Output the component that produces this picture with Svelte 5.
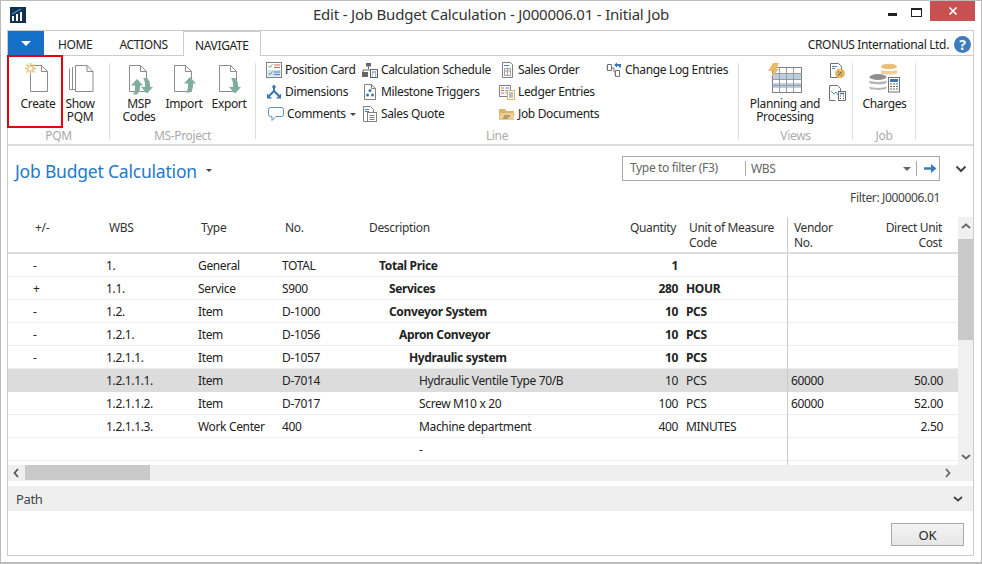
<script>
  const rows = [
    { exp: '-', wbs: '1.', type: 'General', no: 'TOTAL', level: 0, desc: 'Total Price', qty: '1', unit: '', bold: true },
    { exp: '+', wbs: '1.1.', type: 'Service', no: 'S900', level: 1, desc: 'Services', qty: '280', unit: 'HOUR', bold: true },
    { exp: '-', wbs: '1.2.', type: 'Item', no: 'D-1000', level: 1, desc: 'Conveyor System', qty: '10', unit: 'PCS', bold: true },
    { exp: '-', wbs: '1.2.1.', type: 'Item', no: 'D-1056', level: 2, desc: 'Apron Conveyor', qty: '10', unit: 'PCS', bold: true },
    { exp: '-', wbs: '1.2.1.1.', type: 'Item', no: 'D-1057', level: 3, desc: 'Hydraulic system', qty: '10', unit: 'PCS', bold: true },
    { exp: '', wbs: '1.2.1.1.1.', type: 'Item', no: 'D-7014', level: 4, desc: 'Hydraulic Ventile Type 70/B', qty: '10', unit: 'PCS', vendor: '60000', cost: '50.00', selected: true },
    { exp: '', wbs: '1.2.1.1.2.', type: 'Item', no: 'D-7017', level: 4, desc: 'Screw M10 x 20', qty: '100', unit: 'PCS', vendor: '60000', cost: '52.00' },
    { exp: '', wbs: '1.2.1.1.3.', type: 'Work Center', no: '400', level: 4, desc: 'Machine department', qty: '400', unit: 'MINUTES', cost: '2.50' },
    { exp: '', wbs: '', type: '', no: '', level: 4, desc: '-', qty: '', unit: '' }
  ];
</script>

{#snippet doc()}
  <path d="M5.500 1.500h11l6 6v20h-17z M16.500 1.500v6h6" fill="#fff" stroke="#8c8c8c" />
{/snippet}

<!-- curved tail arrows used on the MS-Project buttons -->
{#snippet arrowUp(x, y)}
  <g transform="translate({x} {y})">
    <path d="M0 6.500L6 0l6 6.500H9v2c0 3 -1 5 -3 7H2c1.500 -2 2 -4 2 -7v-2z" fill="#7fae9c" />
  </g>
{/snippet}

{#snippet arrowDown(x, y)}
  <g transform="translate({x} {y})">
    <path d="M0 9L6 15.500 12 9H9V7c0 -3 -1 -5 -3 -7H2c1.500 2 2 4 2 7v2z" fill="#7fae9c" />
  </g>
{/snippet}

<div class="window">
  <header class="titlebar">
    <svg class="app-icon" width="16" height="16" viewBox="0 0 16 16">
      <rect width="16" height="16" fill="#14304f" />
      <path d="M2 14V9h2v5zM6 14V7h2v7zM10 14V5h2v9z" fill="#fff" />
      <path d="M2 7l9 -5" stroke="#3f8ed6" stroke-width="1.400" fill="none" />
    </svg>
    <div class="title">Edit - Job Budget Calculation - J000006.01 - Initial Job</div>
    <div class="controls">
      <span class="min"></span>
      <span class="max"></span>
      <span class="close">
        <svg width="10" height="10" viewBox="0 0 10 10"><path d="M1.500 1.500l7 7M8.500 1.500l-7 7" stroke="#fff" stroke-width="1.700" /></svg>
      </span>
    </div>
  </header>

  <div class="frame">
    <nav class="tabs">
      <div class="menu-btn"><span></span></div>
      <div class="tab home">HOME</div>
      <div class="tab actions">ACTIONS</div>
      <div class="tab active">NAVIGATE</div>
      <div class="company">CRONUS International Ltd.</div>
      <div class="help">?</div>
    </nav>

    <section class="ribbon">
      <div class="group g-pqm">
        <div class="group-body">
          <div class="big w-create selected-btn">
            <svg width="30" height="30" viewBox="0 0 30 30">
              <g transform="translate(2 1)">{@render doc()}</g>
              <g stroke="#e8bb6a" stroke-width="1.400">
                <path d="M7.500 0v11M2 5.500h11M3.600 1.600l7.800 7.800M11.400 1.600l-7.800 7.800" />
              </g>
              <circle cx="7.500" cy="5.500" r="2.600" fill="#fff" stroke="#e8bb6a" />
            </svg>
            <span class="lbl">Create</span>
          </div>
          <div class="big w-show">
            <svg width="30" height="30" viewBox="0 0 30 30">
              <path d="M4.500 5.500v21h6M7.500 4v22.500" fill="none" stroke="#8c8c8c" />
              <path d="M10.500 2.500h11.500l6 6v20h-17.500z M22 2.500v6h6" fill="#fff" stroke="#8c8c8c" />
            </svg>
            <span class="lbl">Show<br />PQM</span>
          </div>
        </div>
        <div class="group-label">PQM</div>
      </div>

      <div class="group g-ms">
        <div class="group-body">
          <div class="big w-msp">
            <svg width="32" height="32" viewBox="0 0 32 32">
              <g transform="translate(1 1)">{@render doc()}</g>
              {@render arrowUp(8, 16)}
              {@render arrowDown(18, 15)}
            </svg>
            <span class="lbl up2">MSP<br />Codes</span>
          </div>
          <div class="big w-import">
            <svg width="30" height="32" viewBox="0 0 30 32">
              <g transform="translate(0 1)">{@render doc()}</g>
              {@render arrowUp(15, 14)}
            </svg>
            <span class="lbl up2">Import</span>
          </div>
          <div class="big w-export">
            <svg width="30" height="32" viewBox="0 0 30 32">
              <g transform="translate(0 1)">{@render doc()}</g>
              {@render arrowDown(15, 15)}
            </svg>
            <span class="lbl up2">Export</span>
          </div>
        </div>
        <div class="group-label">MS-Project</div>
      </div>

      <div class="group g-line">
        <div class="group-body small-cols">
          <div class="col c1">
            <div class="small">
              <svg width="16" height="16" viewBox="0 0 16 16">
                <rect x=".5" y=".5" width="15" height="15" fill="#fff" stroke="#808080" />
                <rect x="1.500" y="8" width="13" height="6.500" fill="#cfe0ef" />
                <path d="M2.500 4l1.500 1.500 2.500-3M2.500 11l1.500 1.500 2.500-3" stroke="#5aa27c" fill="none" />
                <path d="M8 3h6M8 5.500h6" stroke="#d0675a" />
                <path d="M8 10h6M8 12.500h6" stroke="#4f81b8" />
              </svg>
              Position Card
            </div>
            <div class="small">
              <svg width="16" height="16" viewBox="0 0 16 16">
                <path d="M8 7V2M8 7l-5 5M8 7l5 5" stroke="#3a76b0" stroke-width="2" fill="none" />
                <path d="M5.500 3.500L8 .5l2.500 3zM1 9.500v5h5zM15 9.500v5h-5z" fill="#3a76b0" />
              </svg>
              Dimensions
            </div>
            <div class="small comments">
              <svg width="16" height="16" viewBox="0 0 16 16">
                <path d="M2.500 1.500h11a2 2 0 0 1 2 2v5a2 2 0 0 1-2 2H8l-4 4v-4H2.500a2 2 0 0 1-2-2v-5a2 2 0 0 1 2-2z" fill="#fff" stroke="#5a8fc0" />
              </svg>
              Comments<i class="caret"></i>
            </div>
          </div>

          <div class="col c2">
            <div class="small">
              <svg width="16" height="16" viewBox="0 0 16 16">
                <rect x="4" y="1" width="5" height="3.500" fill="#666" />
                <path d="M6.500 4.500V7M1 12V8h9" stroke="#666" fill="none" />
                <rect x="0" y="10" width="6" height="5" fill="#666" />
                <rect x="8.500" y="7.500" width="7" height="8" fill="#fff" stroke="#666" />
                <path d="M10 10h4M10 12h1M13 12h1M10 14h1M13 14h1" stroke="#3a76b0" />
              </svg>
              Calculation Schedule
            </div>
            <div class="small">
              <svg width="16" height="16" viewBox="0 0 16 16">
                <path d="M2.500.5h7l4 4v11h-11z M9.500.5v4h4" fill="#fff" stroke="#808080" />
                <g fill="#3a76b0">
                  <circle cx="8" cy="6.500" r="1.500" />
                  <circle cx="5.500" cy="11" r="1.500" />
                  <circle cx="10.500" cy="11" r="1.500" />
                </g>
              </svg>
              Milestone Triggers
            </div>
            <div class="small">
              <svg width="16" height="16" viewBox="0 0 16 16">
                <path d="M1.500.5h7l3 3v3M1.500.5v15h4" fill="#fff" stroke="#808080" />
                <path d="M3 3.500h4M3 5.500h4" stroke="#4f81b8" />
                <rect x="5.500" y="6.500" width="9" height="9" fill="#fff" stroke="#808080" />
                <path d="M7.500 9.500h5M7.500 11.500h5M7.500 13.500h5" stroke="#808080" />
              </svg>
              Sales Quote
            </div>
          </div>

          <div class="col c3">
            <div class="small">
              <svg width="16" height="16" viewBox="0 0 16 16">
                <path d="M3.500.5h8l2 2v13h-10z" fill="#fff" stroke="#808080" />
                <path d="M5 3.500h5" stroke="#4f81b8" />
                <path d="M5.500 6.500h6v7h-6zM8.500 6.500v7M5.500 9h6" stroke="#a0a0a0" fill="none" />
              </svg>
              Sales Order
            </div>
            <div class="small">
              <svg width="16" height="16" viewBox="0 0 16 16">
                <rect x=".5" y="1.500" width="11" height="11" fill="#fff" stroke="#808080" />
                <path d="M2 4h3M2 6.500h3M2 9h3" stroke="#d0675a" />
                <path d="M6.500 4h3.500M6.500 6.500h3.500M6.500 9h3.500" stroke="#4f81b8" />
                <rect x="8.500" y="6.500" width="7" height="9" fill="#fff" stroke="#d9b56e" />
                <path d="M10 9h4M10 11h4M10 13h4" stroke="#808080" />
              </svg>
              Ledger Entries
            </div>
            <div class="small">
              <svg width="16" height="16" viewBox="0 0 16 16">
                <path d="M0 3h6l1.500 2H15v9H0z" fill="#d9b56e" />
                <path d="M1 7h15l-1.500 7H0z" fill="#edcf96" />
                <path d="M5 10h6M4 12h5" stroke="#7a6a4a" />
              </svg>
              Job Documents
            </div>
          </div>

          <div class="col c4">
            <div class="small">
              <svg width="16" height="16" viewBox="0 0 16 16">
                <path d="M1.500 2.500h4v6h-4zM.5 4.500h1M.5 6.500h1M9.500 8.500h4v6h-4zM8.500 10.500h1M8.500 12.500h1" fill="#fff" stroke="#707070" />
                <path d="M5.500 6h2.500V10" stroke="#707070" fill="none" />
                <path d="M8 3l3-2.500V2h4v3.500h-2V4H11v1.500z" fill="#3a76b0" />
              </svg>
              Change Log Entries
            </div>
          </div>
        </div>
        <div class="group-label">Line</div>
      </div>

      <div class="group g-views">
        <div class="group-body">
          <div class="big w-plan">
            <svg width="36" height="30" viewBox="0 0 36 30">
              <rect x="5.500" y="4.500" width="29" height="25" fill="#fff" stroke="#808080" />
              <path d="M6 11h28v5H6zM6 20h28v5H6z" fill="#b9cde3" />
              <path d="M5 10.500h30M5 16.500h30M5 22.500h30M12.500 4v26M19.500 4v26M26.500 4v26" stroke="#9a9a9a" />
              <path d="M6 0h6l-3 6h3L4 15l2-7H1z" fill="#e8bb6a" />
            </svg>
            <span class="lbl">Planning and<br />Processing</span>
          </div>
          <div class="views-side">
            <svg width="16" height="16" viewBox="0 0 16 16">
              <path d="M1.500.5h8l3 3v11h-11z" fill="#fff" stroke="#707070" />
              <path d="M3 3.500h5M3 5.500h3" stroke="#4f81b8" />
              <circle cx="11" cy="10.500" r="5" fill="#e8bb6a" />
              <path d="M9 12.500l4-4M9 9h1M12 12h1" stroke="#444" />
            </svg>
            <svg width="17" height="16" viewBox="0 0 17 16">
              <path d="M.5.500h8l3 3v3M.5.500v15h6" fill="#fff" stroke="#707070" />
              <path d="M2 6l3 3 2-2 2 3" stroke="#5aa27c" fill="none" />
              <rect x="9.500" y="6.500" width="7" height="9" fill="#fff" stroke="#707070" />
              <path d="M11 8.500h4" stroke="#3a76b0" stroke-width="1.500" />
              <path d="M11 11h1M14 11h1M11 13.500h1M14 13.500h1" stroke="#555" />
            </svg>
          </div>
        </div>
        <div class="group-label">Views</div>
      </div>

      <div class="group g-job">
        <div class="group-body">
          <div class="big w-charges">
            <svg width="32" height="30" viewBox="0 0 32 30">
              <ellipse cx="20" cy="3.500" rx="8" ry="2.800" fill="#e8c078" />
              <path d="M12 6.500c0 2 16 2 16 0v3.500c0 2-16 2-16 0z" fill="#eccf9c" />
              <ellipse cx="9" cy="14" rx="8.500" ry="3" fill="#8f8f8f" />
              <path d="M.5 17c0 2.500 17 2.500 17 0v2.500c0 2.500-17 2.500-17 0zM.5 23c0 2.500 17 2.500 17 0v2c0 2.500-17 2.500-17 0z" fill="#b5b5b5" />
              <rect x="19.500" y="14.500" width="11" height="14.500" fill="#fff" stroke="#707070" />
              <rect x="21" y="16" width="8" height="3" fill="#3a76b0" />
              <path d="M21 21h2M24 21h2M27 21h2M21 23.500h2M24 23.500h2M27 23.500h2M21 26h2M24 26h2M27 26h2" stroke="#666" stroke-width="1.200" />
            </svg>
            <span class="lbl">Charges</span>
          </div>
        </div>
        <div class="group-label">Job</div>
      </div>
    </section>

    <section class="page-head">
      <div class="page-title">
        <h1>Job Budget Calculation</h1>
        <i class="caret title-caret"></i>
      </div>
      <div class="filter-wrap">
        <div class="filter">
          <span class="filter-input">Type to filter (F3)</span>
          <span class="filter-field">WBS</span>
          <i class="caret filter-caret"></i>
          <span class="filter-go">
            <svg width="13" height="11" viewBox="0 0 13 11"><path d="M0 4.200h7V1l5.500 4.500L7 10V6.800H0z" fill="#3f7cb8" /></svg>
          </span>
        </div>
        <svg class="collapse" width="12" height="8" viewBox="0 0 12 8"><path d="M1.500 1.500L6 6l4.500-4.500" stroke="#444" stroke-width="2" fill="none" /></svg>
      </div>
    </section>
    <div class="filter-note">Filter: J000006.01</div>

    <section class="grid-area">
      <div class="grid">
        <div class="row head">
          <div class="cell c-exp">+/-</div>
          <div class="cell c-wbs">WBS</div>
          <div class="cell c-type">Type</div>
          <div class="cell c-no">No.</div>
          <div class="cell c-desc">Description</div>
          <div class="cell c-qty">Quantity</div>
          <div class="cell c-unit">Unit of Measure<br />Code</div>
          <div class="cell c-vendor">Vendor<br />No.</div>
          <div class="cell c-cost">Direct Unit<br />Cost</div>
        </div>
        {#each rows as r}
          <div class="row" class:selected={r.selected}>
            <div class="cell c-exp">{r.exp}</div>
            <div class="cell c-wbs">{r.wbs}</div>
            <div class="cell c-type">{r.type}</div>
            <div class="cell c-no">{r.no}</div>
            <div class="cell c-desc" class:bold={r.bold} style="padding-left: {16 + r.level * 10}px">{r.desc}</div>
            <div class="cell c-qty" class:bold={r.bold}>{r.qty}</div>
            <div class="cell c-unit" class:bold={r.bold}>{r.unit}</div>
            <div class="cell c-vendor">{r.vendor ?? ''}</div>
            <div class="cell c-cost">{r.cost ?? ''}</div>
          </div>
        {/each}
        <div class="grid-rest"><div class="rest-line"></div></div>
      </div>
      <div class="vscroll">
        <svg width="10" height="6" viewBox="0 0 10 6"><path d="M1 5l4-3.500L9 5" stroke="#666" stroke-width="1.800" fill="none" /></svg>
        <div class="vtrack"><div class="vthumb"></div></div>
        <svg width="10" height="6" viewBox="0 0 10 6"><path d="M1 1l4 3.500L9 1" stroke="#666" stroke-width="1.800" fill="none" /></svg>
      </div>
    </section>

    <div class="hscroll">
      <svg class="h-left" width="6" height="10" viewBox="0 0 6 10"><path d="M5 1L1.500 5 5 9" stroke="#555" stroke-width="1.800" fill="none" /></svg>
      <div class="hthumb"></div>
      <svg class="h-right" width="6" height="10" viewBox="0 0 6 10"><path d="M1 1l3.500 4L1 9" stroke="#666" stroke-width="1.800" fill="none" /></svg>
    </div>

    <div class="path-bar">
      <span>Path</span>
      <svg width="10" height="6" viewBox="0 0 10 6"><path d="M1 1l4 3.500L9 1" stroke="#444" stroke-width="1.800" fill="none" /></svg>
    </div>

    <footer class="footer">
      <button class="ok">OK</button>
    </footer>
  </div>
</div>

<style>
  :global(body) {
    margin: 0;
    background: #fff;
  }

  .window {
    width: 982px;
    height: 564px;
    box-sizing: border-box;
    border: 1px solid #bbb;
    border-bottom-width: 2px;
    font-family: "Noto Sans", sans-serif;
    font-size: 12px;
    letter-spacing: -0.35px;
    color: #222;
    display: flex;
    flex-direction: column;
    background: #fff;
    overflow: hidden;
  }

  .titlebar {
    height: 29px;
    flex: none;
    display: flex;
    position: relative;
  }

  .app-icon {
    margin: 6px 0 0 9px;
  }

  .title {
    position: absolute;
    left: 0;
    right: 0;
    top: 3px;
    text-align: center;
    font-size: 15px;
    letter-spacing: -0.2px;
    color: #333;
  }

  .controls {
    margin-left: auto;
    margin-right: 6px;
    display: flex;
    align-items: flex-start;
  }

  .min {
    width: 9px;
    height: 3px;
    background: #222;
    margin: 12px 14px 0 0;
  }

  .max {
    width: 9px;
    height: 6px;
    border: 1px solid #222;
    border-top-width: 2px;
    margin: 7px 8px 0 0;
  }

  .close {
    width: 45px;
    height: 20px;
    background: #c75050;
    display: flex;
    align-items: center;
    justify-content: center;
  }

  .frame {
    flex: 1;
    margin: 0 7px 6px 6px;
    border: 1px solid #ccc;
    display: flex;
    flex-direction: column;
    min-height: 0;
  }

  .tabs {
    height: 24px;
    flex: none;
    display: flex;
    align-items: stretch;
    border-bottom: 1px solid #ccc;
    line-height: 28px;
  }

  .menu-btn {
    width: 36px;
    background: #1470c8;
    display: flex;
    align-items: center;
    justify-content: center;
  }

  .menu-btn span {
    border-left: 5px solid transparent;
    border-right: 5px solid transparent;
    border-top: 5px solid #fff;
  }

  .tab {
    color: #222;
  }

  .home {
    margin-left: 14px;
  }

  .actions {
    margin-left: 27px;
  }

  .active {
    margin-left: 15px;
    width: 78px;
    box-sizing: border-box;
    text-align: center;
    border: 1px solid #ccc;
    border-bottom: none;
    background: #fff;
    height: 25px;
  }

  .company {
    margin-left: auto;
  }

  .help {
    width: 17px;
    height: 17px;
    border-radius: 50%;
    background: #3c7dbb;
    color: #fff;
    font-weight: 700;
    font-size: 14px;
    line-height: 17px;
    text-align: center;
    margin: 5px 2px 0 5px;
    letter-spacing: 0;
  }

  .ribbon {
    height: 90px;
    flex: none;
    box-sizing: border-box;
    border-bottom: 2px solid #ddd;
    display: flex;
    padding-top: 7px;
  }

  .group {
    display: flex;
    flex-direction: column;
    box-sizing: border-box;
    height: 76px;
    border-right: 1px solid #ddd;
    position: relative;
  }

  .g-pqm { width: 102px; }
  .g-ms { width: 146px; }
  .g-line { width: 483px; }
  .g-views { width: 114px; }
  .g-job { width: 63px; }

  .group-body {
    display: flex;
    flex: 1;
    min-height: 0;
  }

  .group-label {
    height: 16px;
    line-height: 16px;
    text-align: center;
    color: #aaa;
    flex: none;
    margin-bottom: -5px;
  }

  .big {
    display: flex;
    flex-direction: column;
    align-items: center;
    text-align: center;
    line-height: 13px;
  }

  .lbl {
    margin-top: 4px;
  }

  .lbl.up2 {
    margin-top: 2px;
  }

  .w-create { width: 54px; padding-left: 6px; }
  .w-show { width: 26px; margin-left: 5px; }
  .w-msp { width: 44px; margin-left: 7px; }
  .w-import { width: 46px; }
  .w-export { width: 44px; }
  .w-plan { width: 82px; margin-left: 5px; flex: none; white-space: nowrap; }
  .w-charges { width: 62px; margin-left: 1px; }

  .selected-btn {
    outline: 2px solid #e8000b;
    outline-offset: -1px;
    margin-top: -7px;
    padding-top: 7px;
    height: 71px;
    box-sizing: border-box;
    position: relative;
  }

  .small-cols {
    padding-left: 10px;
  }

  .col {
    display: flex;
    flex-direction: column;
    gap: 6px;
    margin-top: -1px;
  }

  .c1 { width: 97px; }
  .c2 { width: 134px; margin-left: -1px; }
  .c3 { width: 106px; margin-left: 3px; }
  .c4 { margin-left: 1px; }

  .small {
    height: 16px;
    line-height: 16px;
    display: flex;
    align-items: center;
    gap: 3px;
    white-space: nowrap;
  }

  .comments svg {
    margin-left: 2px;
  }

  .caret {
    display: inline-block;
    border-left: 3px solid transparent;
    border-right: 3px solid transparent;
    border-top: 3px solid #444;
    margin-left: 1px;
  }

  .views-side {
    display: flex;
    flex-direction: column;
    gap: 6px;
    margin-left: 3px;
  }

  .page-head {
    height: 35px;
    flex: none;
    display: flex;
    justify-content: space-between;
  }

  .page-title {
    display: flex;
    align-items: center;
    padding: 13px 0 0 7px;
    height: 24px;
  }

  h1 {
    margin: 0;
    font-weight: 400;
    font-size: 17.5px;
    letter-spacing: -0.2px;
    color: #1f79c9;
  }

  .title-caret {
    margin-left: 9px;
    margin-top: -1px;
  }

  .filter-wrap {
    display: flex;
    align-items: center;
    padding-top: 10px;
    height: 25px;
  }

  .filter {
    width: 318px;
    height: 25px;
    box-sizing: border-box;
    border: 1px solid #aaa;
    display: flex;
    align-items: center;
    color: #666;
  }

  .filter-input {
    width: 123px;
    padding-left: 7px;
    box-sizing: border-box;
    border-right: 1px solid #aaa;
    height: 15px;
    line-height: 13px;
  }

  .filter-field {
    margin-left: 5px;
    flex: 1;
  }

  .filter-caret {
    border-left-width: 4px;
    border-right-width: 4px;
    border-top-width: 4px;
    border-top-color: #666;
  }

  .filter-go {
    margin-left: 5px;
    width: 23px;
    height: 15px;
    border-left: 1px solid #aaa;
    display: flex;
    align-items: center;
    justify-content: center;
    box-sizing: border-box;
    padding-left: 4px;
  }

  .collapse {
    margin: 0 6px 0 15px;
  }

  .filter-note {
    height: 36px;
    flex: none;
    text-align: right;
    padding: 9px 33px 0 0;
    box-sizing: border-box;
    line-height: 16px;
    color: #444;
  }

  .grid-area {
    flex: none;
    height: 248px;
    display: flex;
  }

  .grid {
    width: 950px;
    position: relative;
  }

  .row {
    display: grid;
    grid-template-columns: 96px 91px 84px 84px 237px 80px 107px 93px 65px 13px;
    height: 23px;
    box-sizing: border-box;
    border-bottom: 1px solid #eee;
    line-height: 24px;
  }

  .row.head {
    height: 37px;
    border-bottom: 2px solid #ddd;
    line-height: 15px;
    padding-top: 3px;
    color: #333;
  }

  .row.selected {
    background: #dcdcdc;
    border-bottom-color: #dcdcdc;
  }

  .cell {
    white-space: nowrap;
    box-sizing: border-box;
  }

  .bold {
    font-weight: 700;
  }

  .c-exp { padding-left: 25px; }
  .c-wbs { padding-left: 2px; }
  .c-type { padding-left: 3px; }
  .c-no { padding-left: 3px; }
  .c-desc { padding-left: 6px; }
  .c-qty { text-align: right; padding-right: 2px; }
  .c-unit { padding-left: 6px; }
  .c-vendor {
    padding-left: 3px;
    border-left: 1px solid #ccc;
  }
  .c-cost { text-align: right; grid-column: 9; padding-right: 2px; }

  .head .c-exp { padding-left: 27px; }
  .head .c-wbs { padding-left: 5px; }
  .head .c-type { padding-left: 6px; }
  .head .c-no { padding-left: 6px; }
  .head .c-qty { padding-right: 4px; }
  .head .c-unit { padding-left: 9px; }
  .head .c-vendor { padding-left: 6px; margin-top: -3px; padding-top: 3px; }
  .head .c-desc { padding-left: 6px; }
  .head .c-cost { padding-right: 3px; }

  .grid-rest {
    height: 4px;
    position: relative;
  }

  .rest-line {
    position: absolute;
    left: 779px;
    top: 0;
    bottom: 0;
    width: 1px;
    background: #ccc;
  }

  .vscroll {
    width: 16px;
    background: #f0f0f0;
    display: flex;
    flex-direction: column;
    align-items: center;
    padding: 6px 0 5px;
    box-sizing: border-box;
    gap: 4px;
  }

  .vtrack {
    flex: 1;
    width: 100%;
    margin-top: 6px;
  }

  .vthumb {
    height: 101px;
    background: #c9c9c9;
  }

  .hscroll {
    height: 16px;
    flex: none;
    background: #efefef;
    display: flex;
    align-items: center;
    position: relative;
  }

  .h-left {
    margin-left: 5px;
  }

  .hthumb {
    width: 125px;
    height: 15px;
    background: #c9c9c9;
    margin: -1px 0 0 6px;
  }

  .h-right {
    margin-left: auto;
    margin-right: 22px;
  }

  .path-bar {
    height: 25px;
    flex: none;
    margin-top: 5px;
    background: #efefef;
    display: flex;
    align-items: center;
    justify-content: space-between;
    padding: 0 10px 0 8px;
    font-size: 13px;
    color: #444;
  }

  .footer {
    flex: 1;
    display: flex;
    justify-content: flex-end;
    align-items: flex-start;
    padding: 12px 9px 0 0;
  }

  .ok {
    width: 73px;
    height: 23px;
    border: 1px solid #aaa;
    background: linear-gradient(#f4f4f4, #e6e6e6);
    font: inherit;
    font-size: 13px;
    color: #222;
    padding: 0;
  }
</style>
